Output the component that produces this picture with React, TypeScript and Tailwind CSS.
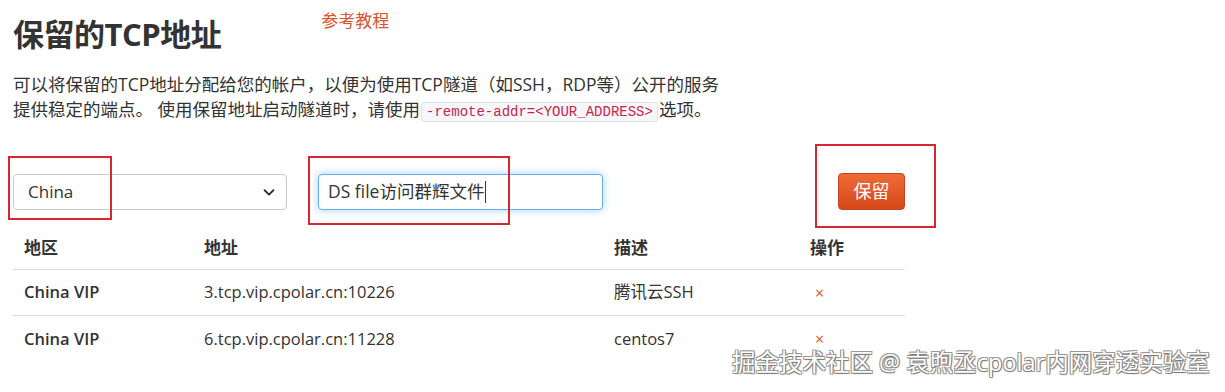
export default function App() {
  const rows = [
    { region: "China VIP", addr: "3.tcp.vip.cpolar.cn:10226", desc: "腾讯云SSH" },
    { region: "China VIP", addr: "6.tcp.vip.cpolar.cn:11228", desc: "centos7" },
  ]

  return (
    <div
      className="relative h-[392px] w-[1225px] overflow-hidden bg-white text-[#333]"
      style={{ fontFamily: '"Open Sans", "Noto Sans CJK SC", sans-serif' }}
    >
      <div className="pl-[13px] pt-[12px]">
        <div className="flex items-start">
          <h1 className="h-[44px] text-[31px] font-bold leading-[44px] tracking-[-0.5px]">保留的TCP地址</h1>
          <a className="ml-[100px] mt-[-3px] text-[17px] leading-[24px] text-[#d9532c]">参考教程</a>
        </div>

        <p className="mt-[16px] text-[17.5px] leading-[25px]">
          可以将保留的TCP地址分配给您的帐户，以便为使用TCP隧道（如SSH，RDP等）公开的服务
          <br />
          提供稳定的端点。 使用保留地址启动隧道时，请使用
          <code
            className="mx-[1px] rounded-[3px] border border-[#e1e1e8] bg-[#f7f7f9] px-[4px] py-[1px] text-[14px] text-[#c7254e]"
            style={{ fontFamily: '"Liberation Mono", monospace' }}
          >
            -remote-addr=&lt;YOUR_ADDRESS&gt;
          </code>
          选项。
        </p>

        <div className="mt-[48px] flex items-center">
          <div className="flex h-[36px] w-[274px] items-center justify-between rounded-[4px] border border-[#ccc] bg-white pl-[14px] pr-[10px] text-[17px]">
            <span>China</span>
            <svg width="14" height="14" viewBox="0 0 16 16" fill="none" stroke="#333" strokeWidth="2.2" strokeLinecap="round" strokeLinejoin="round">
              <path d="M3 6l5 5 5-5" />
            </svg>
          </div>

          <div className="ml-[31px] flex h-[36px] w-[285px] items-center rounded-[4px] border border-[#66afe9] bg-white pl-[9px] text-[17.5px] shadow-[0_0_8px_rgba(102,175,233,0.6)]">
            <span>DS file访问群辉文件</span>
            <span className="ml-[1px] h-[22px] w-[1px] bg-[#333]" />
          </div>

          <button className="ml-[235px] flex h-[37px] w-[67px] items-center justify-center rounded-[4px] border border-[#c8441a] bg-gradient-to-b from-[#ef6b35] to-[#d5481a] text-[18px] text-white">
            保留
          </button>
        </div>

        <div className="mt-[16px] w-[892px] text-[16.5px]">
          <div className="flex h-[44px] items-center border-b border-[#ddd] text-[17px] font-bold">
            <div className="w-[180px] pl-[11px]">地区</div>
            <div className="w-[410px] pl-[11px]">地址</div>
            <div className="w-[196px] pl-[11px]">描述</div>
            <div className="pl-[11px]">操作</div>
          </div>
          {rows.map((r, i) => (
            <div key={i} className={`flex h-[46px] items-center ${i === 0 ? "border-b border-[#ddd]" : ""}`}>
              <div className="w-[180px] pl-[11px] font-semibold">{r.region}</div>
              <div className="w-[410px] pl-[11px]">{r.addr}</div>
              <div className="w-[196px] pl-[11px]">{r.desc}</div>
              <div className="pl-[16px] text-[16px] leading-[12px] text-[#e0552a]">×</div>
            </div>
          ))}
        </div>
      </div>

      {/* annotation boxes */}
      <div className="absolute left-[8px] top-[156px] h-[64px] w-[104px] border-2 border-[#d52631]" />
      <div className="absolute left-[308px] top-[156px] h-[69px] w-[202px] border-2 border-[#d52631]" />
      <div className="absolute left-[815px] top-[144px] h-[84px] w-[121px] border-2 border-[#d52631]" />

      <div
        className="absolute left-[732px] top-[350px] text-[23.5px] leading-[24px] text-white"
        style={{ textShadow: "1px 1px 1px #777, -1px -1px 0 #999, 1px -1px 0 #999, -1px 1px 0 #999" }}
      >
        掘金技术社区 @ 袁煦丞cpolar内网穿透实验室
      </div>
    </div>
  )
}
